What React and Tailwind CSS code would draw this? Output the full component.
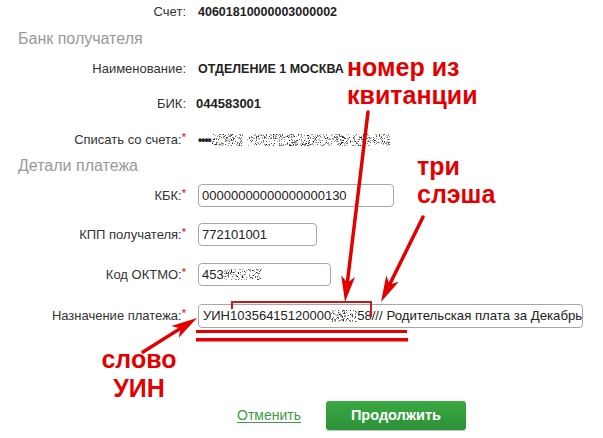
import React from "react";

function rng(seed) {
  let s = seed;
  return () => {
    s = (s * 1103515245 + 12345) & 0x7fffffff;
    return s / 0x7fffffff;
  };
}

function Noise({ w, h, seed = 1, density = 0.3 }) {
  const r = rng(seed);
  const pal = ["#222", "#555", "#888", "#aaa", "#666", "#9a8", "#a98", "#89a"];
  const dots = [];
  for (let y = 0; y < h; y++) {
    for (let x = 0; x < w; x++) {
      if (r() < density) {
        dots.push(<rect key={x + "-" + y} x={x} y={y} width="1" height="1" fill={pal[Math.floor(r() * pal.length)]} />);
      }
    }
  }
  return (
    <svg width={w} height={h} className="inline-block shrink-0 align-middle" shapeRendering="crispEdges">
      {dots}
    </svg>
  );
}

function Label({ children, req }) {
  return (
    <div className="w-[186px] shrink-0 text-right text-[13px] text-[#333]">
      {children}
      {req && <span className="relative -top-[3px] text-[11px] text-[#d40000]">*</span>}
    </div>
  );
}

function Heading({ children, className }) {
  return (
    <div className={"flex h-[24px] items-center pl-[18px] text-[16px] text-[#999] " + className}>{children}</div>
  );
}

function Arrow({ x1, y1, x2, y2, len = 26, hw = 7 }) {
  const dx = x2 - x1;
  const dy = y2 - y1;
  const d = Math.hypot(dx, dy);
  const ux = dx / d;
  const uy = dy / d;
  const px = -uy;
  const py = ux;
  const bx = x2 - ux * len;
  const by = y2 - uy * len;
  const nx = x2 - ux * (len * 0.75);
  const ny = y2 - uy * (len * 0.75);
  const pts = [
    [x2, y2],
    [bx + px * hw, by + py * hw],
    [nx, ny],
    [bx - px * hw, by - py * hw],
  ]
    .map((p) => p.join(","))
    .join(" ");
  return (
    <g>
      <line x1={x1} y1={y1} x2={nx} y2={ny} stroke="#e30000" strokeWidth="3.5" strokeLinecap="round" />
      <polygon points={pts} fill="#e30000" />
    </g>
  );
}

export default function App() {
  const font = { fontFamily: '"Liberation Sans", Arial, sans-serif' };
  return (
    <div className="relative h-[438px] w-[603px] overflow-hidden bg-white" style={font}>
      <div className="flex flex-col">
        <div className="flex h-[24px] items-center">
          <Label>Счет:</Label>
          <div className="ml-[12px] text-[12.5px] font-bold text-[#222]">40601810000003000002</div>
        </div>
        <Heading className="mt-[3px]">Банк получателя</Heading>
        <div className="mt-[6px] flex h-[24px] items-center">
          <Label>Наименование:</Label>
          <div className="ml-[12px] text-[12.5px] font-bold text-[#222]">ОТДЕЛЕНИЕ 1 МОСКВА</div>
        </div>
        <div className="mt-[11px] flex h-[24px] items-center">
          <Label>БИК:</Label>
          <div className="ml-[10px] text-[13px] font-bold text-[#222]">044583001</div>
        </div>
        <div className="mt-[12px] flex h-[24px] items-center">
          <Label req>Списать со счета:</Label>
          <div className="ml-[12px] flex items-center text-[12px] font-bold text-[#222]">
            <span className="mr-[1px] tracking-[-1px]">••••</span>
            <Noise w={31} h={12} seed={7} density={0.3} />
            <span className="w-[4px]" />
            <Noise w={143} h={12} seed={11} density={0.3} />
          </div>
        </div>
        <Heading className="mt-[2px]">Детали платежа</Heading>
        <div className="mt-[6px] flex h-[23px] items-center">
          <Label req>КБК:</Label>
          <div className="ml-[12px] flex h-[23px] w-[196px] items-center rounded-[4px] border border-[#a8a8a8] pl-[3px] text-[13px] text-[#222]">
            00000000000000000130
          </div>
        </div>
        <div className="mt-[16px] flex h-[23px] items-center">
          <Label req>КПП получателя:</Label>
          <div className="ml-[12px] flex h-[23px] w-[119px] items-center rounded-[4px] border border-[#a8a8a8] pl-[3px] text-[13px] text-[#222]">
            772101001
          </div>
        </div>
        <div className="mt-[17px] flex h-[23px] items-center">
          <Label req>Код ОКТМО:</Label>
          <div className="ml-[12px] flex h-[23px] w-[133px] items-center rounded-[4px] border border-[#a8a8a8] pl-[3px] text-[13px] text-[#222]">
            453
            <Noise w={38} h={11} seed={3} density={0.28} />
          </div>
        </div>
        <div className="mt-[18px] flex h-[24px] items-center">
          <Label req>Назначение платежа:</Label>
          <div className="ml-[12px] flex h-[24px] w-[385px] items-center overflow-hidden whitespace-nowrap rounded-[4px] border border-[#a8a8a8] pl-[4px] text-[13px] text-[#222]">
            УИН10356415120000
            <Noise w={26} h={12} seed={5} density={0.3} />
            58///
            <span className="ml-[4px] text-[13.2px]">Родительская плата за Декабрь</span>
          </div>
        </div>
        <div className="mt-[73px] flex h-[29px] items-center">
          <a className="ml-[237px] text-[14px] text-[#3f9a45] underline underline-offset-2" href="#">
            Отменить
          </a>
          <button className="ml-[25px] h-[29px] w-[140px] rounded-[3px] bg-gradient-to-b from-[#3aa843] to-[#2c9236] text-[14.5px] font-bold text-white shadow-[0_1px_1px_rgba(0,0,0,0.25)]">
            Продолжить
          </button>
        </div>
      </div>

      {/* annotations overlay */}
      <svg className="pointer-events-none absolute left-0 top-0" width="603" height="438">
        <path d="M232 309 V302 H371 V317" fill="none" stroke="#cc1a1a" strokeWidth="2" />
        <rect x="196" y="330" width="211" height="3" fill="#e30000" />
        <rect x="196" y="338" width="212" height="3.5" fill="#e30000" />
        <Arrow x1={368} y1={112} x2={345} y2={302} />
        <Arrow x1={423} y1={217} x2={381} y2={302} />
        <Arrow x1={143} y1={352} x2={197} y2={318} />
      </svg>

      <div className="pointer-events-none absolute left-[347px] top-[53px] text-[25px] font-bold leading-[28px] text-[#e30000]">
        <div>номер из</div>
        <div>квитанции</div>
      </div>
      <div className="pointer-events-none absolute left-[417px] top-[152px] text-[25px] font-bold leading-[28px] text-[#e30000]">
        <div>три</div>
        <div>слэша</div>
      </div>
      <div className="pointer-events-none absolute left-[98px] top-[345px] w-[82px] text-center text-[25px] font-bold leading-[29px] text-[#e30000]">
        <div>слово</div>
        <div>УИН</div>
      </div>
    </div>
  );
}
